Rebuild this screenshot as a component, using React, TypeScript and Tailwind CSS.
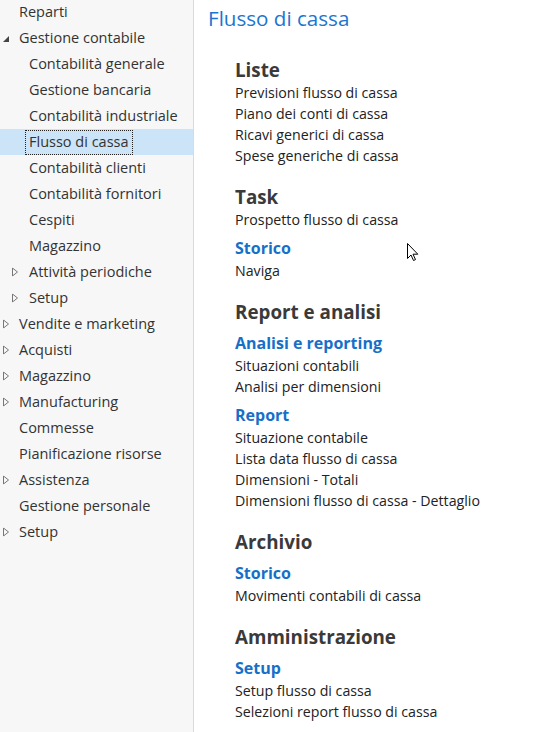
import React from 'react'

type NavItem = {
  label: string
  level: 0 | 1
  arrow?: 'open' | 'closed'
  selected?: boolean
}

const nav: NavItem[] = [
  { label: 'Reparti', level: 0 },
  { label: 'Gestione contabile', level: 0, arrow: 'open' },
  { label: 'Contabilità generale', level: 1 },
  { label: 'Gestione bancaria', level: 1 },
  { label: 'Contabilità industriale', level: 1 },
  { label: 'Flusso di cassa', level: 1, selected: true },
  { label: 'Contabilità clienti', level: 1 },
  { label: 'Contabilità fornitori', level: 1 },
  { label: 'Cespiti', level: 1 },
  { label: 'Magazzino', level: 1 },
  { label: 'Attività periodiche', level: 1, arrow: 'closed' },
  { label: 'Setup', level: 1, arrow: 'closed' },
  { label: 'Vendite e marketing', level: 0, arrow: 'closed' },
  { label: 'Acquisti', level: 0, arrow: 'closed' },
  { label: 'Magazzino', level: 0, arrow: 'closed' },
  { label: 'Manufacturing', level: 0, arrow: 'closed' },
  { label: 'Commesse', level: 0 },
  { label: 'Pianificazione risorse', level: 0 },
  { label: 'Assistenza', level: 0, arrow: 'closed' },
  { label: 'Gestione personale', level: 0 },
  { label: 'Setup', level: 0, arrow: 'closed' },
]

type Group = { title?: string; items: string[] }
type Section = { title: string; groups: Group[] }

const sections: Section[] = [
  {
    title: 'Liste',
    groups: [
      {
        items: [
          'Previsioni flusso di cassa',
          'Piano dei conti di cassa',
          'Ricavi generici di cassa',
          'Spese generiche di cassa',
        ],
      },
    ],
  },
  {
    title: 'Task',
    groups: [
      { items: ['Prospetto flusso di cassa'] },
      { title: 'Storico', items: ['Naviga'] },
    ],
  },
  {
    title: 'Report e analisi',
    groups: [
      { title: 'Analisi e reporting', items: ['Situazioni contabili', 'Analisi per dimensioni'] },
      {
        title: 'Report',
        items: [
          'Situazione contabile',
          'Lista data flusso di cassa',
          'Dimensioni - Totali',
          'Dimensioni flusso di cassa - Dettaglio',
        ],
      },
    ],
  },
  {
    title: 'Archivio',
    groups: [{ title: 'Storico', items: ['Movimenti contabili di cassa'] }],
  },
  {
    title: 'Amministrazione',
    groups: [{ title: 'Setup', items: ['Setup flusso di cassa', 'Selezioni report flusso di cassa'] }],
  },
]

function Arrow({ kind }: { kind: 'open' | 'closed' }) {
  if (kind === 'open') {
    return (
      <svg width="6" height="6" viewBox="0 0 6 6" className="block">
        <path d="M6 0 L6 6 L0 6 Z" fill="#444" />
      </svg>
    )
  }
  return (
    <svg width="6" height="9" viewBox="0 0 6 9" className="block">
      <path d="M0.5 0.5 L5.5 4.5 L0.5 8.5 Z" fill="none" stroke="#777" strokeWidth="1" />
    </svg>
  )
}

function Sidebar() {
  return (
    <div className="w-[194px] shrink-0 bg-[#f7f7f7] border-r border-[#dadada] min-h-[732px]">
      <div className="-mt-px">
        {nav.map((item, i) => (
          <div
            key={i}
            className={`relative h-[26px] flex items-center text-[14.5px] text-[#333] ${
              item.selected ? 'bg-[#cce4f7]' : ''
            } ${item.level === 0 ? 'pl-[19px]' : 'pl-[29px]'}`}
          >
            {item.arrow && (
              <span
                className={`absolute top-1/2 -translate-y-1/2 ${
                  item.level === 0 ? 'left-[3px]' : 'left-[12px]'
                } ${item.arrow === 'open' ? 'mt-px' : ''}`}
              >
                <Arrow kind={item.arrow} />
              </span>
            )}
            {item.selected ? (
              <span className="-ml-[4px] px-[3px] h-[25px] flex items-center border border-dotted border-[#222]">
                {item.label}
              </span>
            ) : (
              <span>{item.label}</span>
            )}
          </div>
        ))}
      </div>
    </div>
  )
}

function Content() {
  return (
    <div className="flex-1 pl-[14px] pt-[4px]">
      <h1 className="text-[20.6px] leading-[28px] text-[#1c75cf]">Flusso di cassa</h1>
      <div className="pl-[27px] pt-[26px]">
        {sections.map((s, si) => (
          <div key={si} className={si === 0 ? '' : 'mt-[19px]'}>
            <h2 className="text-[18.8px] leading-[24px] font-bold text-[#3a3a3a]">{s.title}</h2>
            {s.groups.map((g, gi) => (
              <div key={gi} className={g.title ? (gi === 0 ? 'mt-[7px]' : 'mt-[6px]') : ''}>
                {g.title && (
                  <h3 className="text-[16px] leading-[24px] font-bold text-[#1670c8]">{g.title}</h3>
                )}
                {g.items.map((it, ii) => (
                  <div key={ii} className="text-[14.2px] leading-[21px] text-[#222]">
                    {it}
                  </div>
                ))}
              </div>
            ))}
          </div>
        ))}
      </div>
    </div>
  )
}

export default function App() {
  return (
    <div
      className="relative flex w-[534px] h-[732px] overflow-hidden bg-white"
      style={{ fontFamily: '"Open Sans", "Noto Sans", sans-serif' }}
    >
      <Sidebar />
      <Content />
      <svg
        width="12"
        height="19"
        viewBox="0 0 12 19"
        className="absolute left-[407px] top-[243px]"
      >
        <path
          d="M0.5 0.5 L0.5 15.5 L4 12 L6.5 17.5 L8.5 16.6 L6 11.2 L10.8 11.2 Z"
          fill="#fff"
          stroke="#000"
          strokeWidth="1"
          strokeLinejoin="round"
        />
      </svg>
    </div>
  )
}
